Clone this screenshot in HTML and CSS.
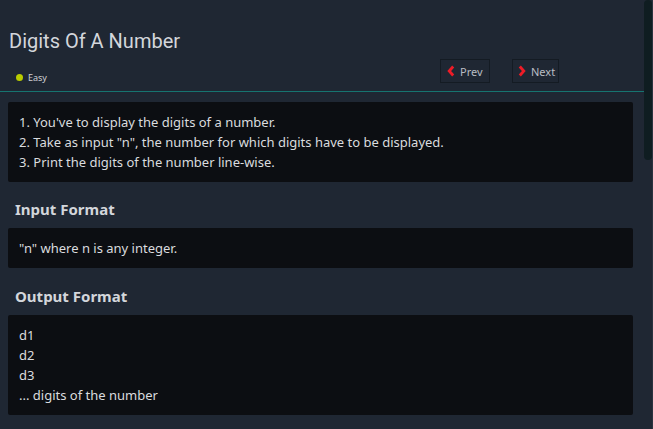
FILE: index.html
```html
<!DOCTYPE html>
<html>
<head>
<meta charset="utf-8">
<link rel="stylesheet" href="styles.css">
</head>
<body>
<div class="app">
  <main class="main">
    <header class="head">
      <h1 class="title">Digits Of A Number</h1>
      <div class="meta">
        <div class="level"><span class="dot"></span><span class="level-text">Easy</span></div>
        <div class="nav">
          <button class="btn btn-prev"><svg class="chev" viewBox="0 0 8 12" width="8" height="12"><path d="M6.2 1.5L2.2 6l4 4.5" fill="none" stroke="#ee1c27" stroke-width="2.8"/></svg>Prev</button>
          <button class="btn btn-next"><svg class="chev" viewBox="0 0 8 12" width="8" height="12"><path d="M1.8 1.5L5.8 6l-4 4.5" fill="none" stroke="#ee1c27" stroke-width="2.8"/></svg>Next</button>
        </div>
      </div>
    </header>
    <section class="content">
      <div class="box">
        <div>1. You've to display the digits of a number.</div>
        <div>2. Take as input "n", the number for which digits have to be displayed.</div>
        <div>3. Print the digits of the number line-wise.</div>
      </div>
      <h2 class="sub">Input Format</h2>
      <div class="box">
        <div>"n" where n is any integer.</div>
      </div>
      <h2 class="sub sub-b">Output Format</h2>
      <div class="box">
        <div>d1</div>
        <div>d2</div>
        <div>d3</div>
        <div>... digits of the number</div>
      </div>
    </section>
  </main>
  <div class="scroll"><div class="thumb"></div></div>
</div>
</body>
</html>
```
FILE: styles.css
```css
* { box-sizing: border-box; }
html, body { margin: 0; padding: 0; }
body {
  background: #1f2733;
  font-family: "Noto Sans", "Open Sans", sans-serif;
  color: #d6d8dc;
  width: 653px;
  height: 429px;
  overflow: hidden;
}
.app { display: flex; height: 429px; }
.main { flex: 1; min-width: 0; }
.scroll {
  width: 9px;
  display: flex;
  flex-direction: column;
  border-right: 1px solid #2a333f;
}
.thumb {
  width: 8px;
  height: 160px;
  background: #0f1d21;
  border-radius: 4px;
}
.head {
  height: 92px;
  border-bottom: 1px solid #167470;
  padding: 28px 0 0 9px;
}
.title {
  margin: 0;
  font-family: Roboto, "Noto Sans", sans-serif;
  font-size: 20px;
  font-weight: 400;
  line-height: 26px;
  color: #d3d6db;
}
.meta {
  display: flex;
  justify-content: space-between;
  align-items: flex-start;
  margin-top: 5px;
}
.level {
  display: flex;
  align-items: center;
  gap: 5px;
  padding: 12px 0 0 7px;
}
.dot {
  width: 7px;
  height: 7px;
  border-radius: 50%;
  background: #b9cc00;
}
.level-text { font-size: 9px; color: #cfd1d4; }
.nav {
  display: flex;
  gap: 22px;
  margin-right: 85px;
}
.btn {
  display: flex;
  align-items: center;
  gap: 5px;
  height: 24px;
  background: #1f2733;
  border: 1px solid #141b23;
  color: #b9bdc3;
  font-family: "Noto Sans", sans-serif;
  font-size: 11px;
}
.btn-prev { width: 50px; padding: 0 0 0 6px; }
.btn-next { width: 47px; padding: 0 0 0 5px; }
.content { padding: 10px 11px 0 8px; }
.box {
  background: #0c0e12;
  border-radius: 2px;
  padding: 10px 11px;
  font-size: 13px;
  line-height: 20px;
  color: #dadcdf;
}
.sub {
  margin: 0;
  padding: 17px 0 9px 7px;
  font-size: 15px;
  line-height: 20px;
  font-weight: 700;
  color: #d3d6db;
}
.sub-b { padding-top: 18px; }
```
